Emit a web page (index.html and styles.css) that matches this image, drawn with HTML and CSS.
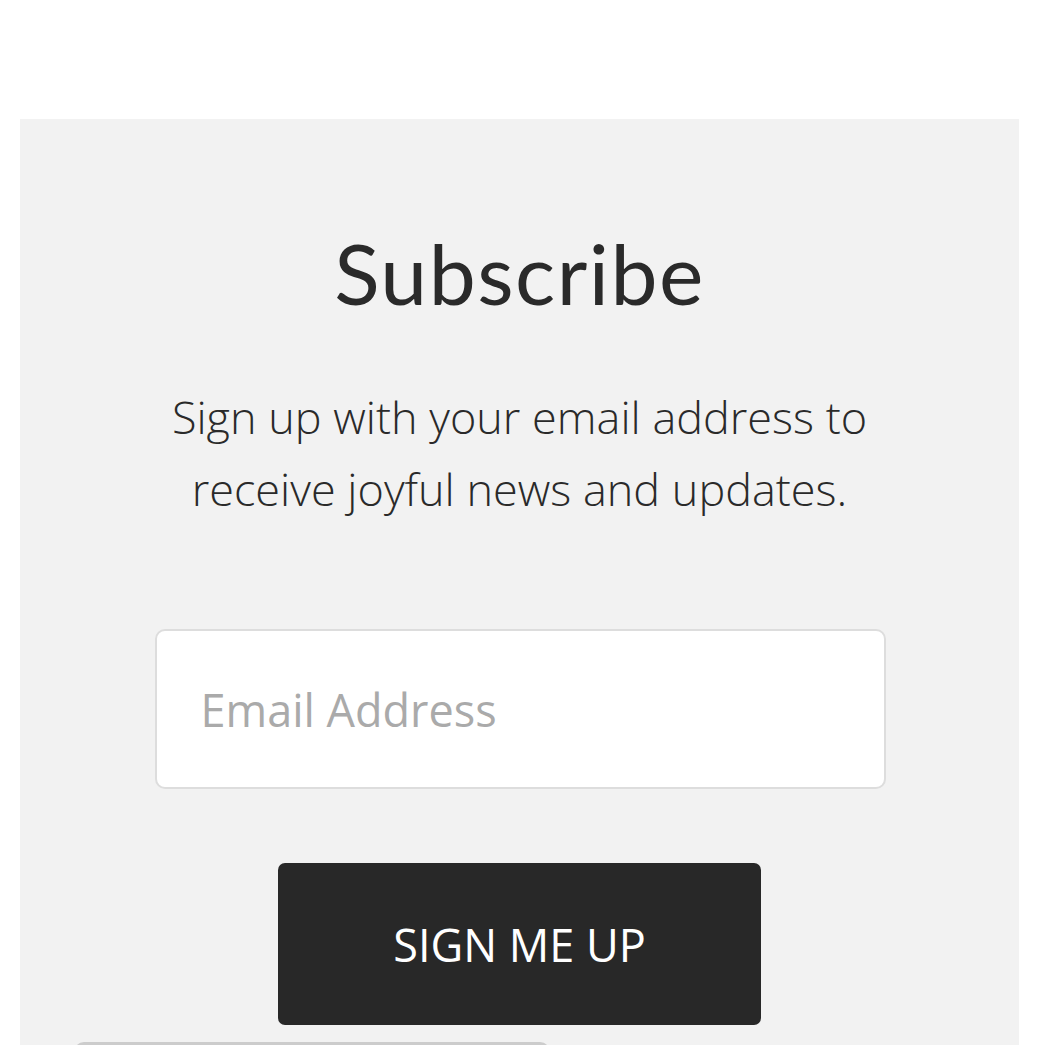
FILE: index.html
```html
<!DOCTYPE html>
<html lang="en">
<head>
<meta charset="utf-8">
<title>Subscribe</title>
<link rel="stylesheet" href="styles.css">
</head>
<body>
<main class="page">
  <section class="panel">
    <h1 class="title">Subscribe</h1>
    <p class="lead">Sign up with your email address to<br>receive joyful news and updates.</p>
    <form class="form">
      <input class="email" type="email" placeholder="Email Address">
      <button class="submit" type="button">SIGN ME UP</button>
    </form>
    <div class="next"></div>
  </section>
</main>
</body>
</html>
```
FILE: styles.css
```css
html, body {
  margin: 0;
  padding: 0;
  background: #ffffff;
  overflow: hidden;
}
.page {
  padding-top: 119px;
}
.panel {
  margin-left: 20px;
  width: 999px;
  height: 960px;
  background: #f2f2f2;
  display: flex;
  flex-direction: column;
  align-items: center;
  color: #2a2a2a;
}
.title {
  margin: 104px 0 0;
  font-family: Lato, "Open Sans", sans-serif;
  font-weight: 400;
  font-size: 84px;
  line-height: 100px;
  letter-spacing: 1.5px;
}
.lead {
  margin: 58px 0 0;
  font-family: "Open Sans", sans-serif;
  font-weight: 300;
  font-size: 45px;
  line-height: 72px;
  text-align: center;
}
.form {
  margin-top: 104px;
  display: flex;
  flex-direction: column;
  align-items: center;
}
.email {
  box-sizing: border-box;
  width: 731px;
  height: 160px;
  border: 2px solid #dddddd;
  border-radius: 10px;
  background: #ffffff;
  padding: 0 0 0 44px;
  font-family: "Open Sans", sans-serif;
  font-size: 45px;
  color: #2a2a2a;
  outline: none;
  margin-left: 1px;
}
.email::placeholder {
  color: #aaaaaa;
}
.submit {
  margin-top: 74px;
  width: 483px;
  height: 162px;
  border: none;
  border-radius: 7px;
  background: #282828;
  color: #ffffff;
  font-family: "Open Sans", sans-serif;
  font-size: 45px;
  padding: 0;
}
.next {
  align-self: flex-start;
  margin: 17px 0 0 54px;
  width: 476px;
  height: 40px;
  border-top: 3px solid #cccccc;
  border-radius: 10px 10px 0 0;
}
```
